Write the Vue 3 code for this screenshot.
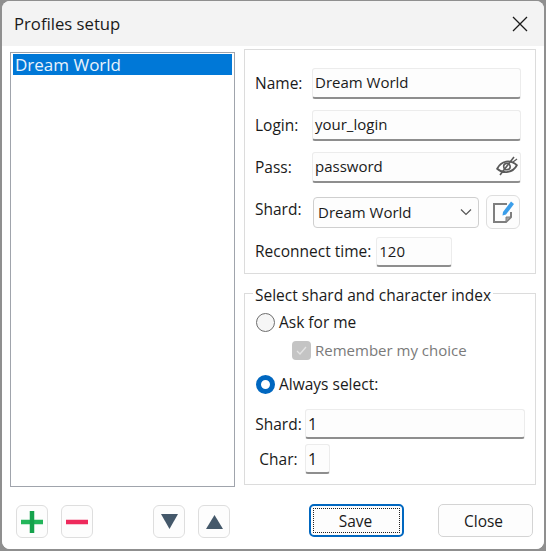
<template>
  <div class="screen">
    <div class="dialog">
      <header class="titlebar">
        <span class="title">Profiles setup</span>
        <svg class="close-x" width="16" height="16" viewBox="0 0 16 16">
          <path d="M1 1L15 15M15 1L1 15" stroke="#1a1a1a" stroke-width="1.3" fill="none" />
        </svg>
      </header>
      <div class="body">
        <div class="left">
          <div class="list">
            <div class="list-item">{{ profile.name }}</div>
          </div>
          <div class="tools">
            <button class="icon-btn">
              <svg width="22" height="22" viewBox="0 0 22 22">
                <path d="M0 11H22" stroke="#22b55a" stroke-width="4.5" fill="none" />
                <path d="M11 0V22" stroke="#15a24c" stroke-width="4.5" fill="none" />
              </svg>
            </button>
            <button class="icon-btn">
              <svg width="22" height="22" viewBox="0 0 22 22">
                <path d="M0 11H22" stroke="#ee2a5c" stroke-width="4.500" fill="none" />
              </svg>
            </button>
            <button class="icon-btn push">
              <svg width="17" height="15" viewBox="0 0 17 15">
                <path d="M0 0H17L8.500 15Z" fill="#44586a" />
              </svg>
            </button>
            <button class="icon-btn">
              <svg width="17" height="14" viewBox="0 0 17 14">
                <path d="M0 14H17L8.500 0Z" fill="#44586a" />
              </svg>
            </button>
          </div>
        </div>
        <div class="right">
          <section class="group group-main">
            <div class="row">
              <label>Name:</label>
              <div class="input wide">{{ profile.name }}</div>
            </div>
            <div class="row">
              <label>Login:</label>
              <div class="input wide">{{ profile.login }}</div>
            </div>
            <div class="row">
              <label>Pass:</label>
              <div class="input wide pass">
                {{ profile.pass }}
                <svg class="eye" width="22" height="20" viewBox="0 0 22 20">
                  <g transform="rotate(-10 11 11)">
                    <path d="M1 11C4 7 7 5.500 11 5.500C15 5.500 18 7 21 11C18 15 15 16 11 16C7 16 4 15 1 11Z" fill="none" stroke="#5a5a5a" stroke-width="1.800" />
                    <circle cx="11" cy="10.500" r="3.200" fill="none" stroke="#5a5a5a" stroke-width="1.600" />
                  </g>
                  <path d="M4 19L18 1" stroke="#5a5a5a" stroke-width="1.600" />
                  <path d="M17 6L21 3" stroke="#5a5a5a" stroke-width="1.200" />
                </svg>
              </div>
            </div>
            <div class="row shard-row">
              <label class="top-label">Shard:</label>
              <div class="select">
                {{ profile.name }}
                <svg width="12" height="8" viewBox="0 0 12 8">
                  <path d="M1 1.500L6 6.500L11 1.500" fill="none" stroke="#555" stroke-width="1.200" />
                </svg>
              </div>
              <button class="icon-btn edit-btn">
                <svg width="24" height="26" viewBox="0 0 24 26">
                  <path d="M16 5H3V23H15L20 18V13" fill="none" stroke="#7f7f7f" stroke-width="2" />
                  <path d="M15 23V18H20Z" fill="#a0a0a0" stroke="#7f7f7f" stroke-width="1" />
                  <path d="M12 13L20 2.500L23 5L15 15.500L11.500 16.500Z" fill="#3b9eea" />
                </svg>
              </button>
            </div>
            <div class="row reconnect">
              <label>Reconnect time:</label>
              <div class="input time">{{ profile.reconnect }}</div>
            </div>
          </section>
          <section class="group group-index">
            <div class="legend">Select shard and character index</div>
            <div class="option">
              <span class="radio"></span>
              <span>Ask for me</span>
            </div>
            <div class="option nested">
              <span class="check">
                <svg width="13" height="13" viewBox="0 0 13 13">
                  <path d="M2 7L5 10L11 3" fill="none" stroke="#e4e4e4" stroke-width="1.300" />
                </svg>
              </span>
              <span class="muted">Remember my choice</span>
            </div>
            <div class="option always">
              <span class="radio on"></span>
              <span>Always select:</span>
            </div>
            <div class="row index-row first">
              <label class="index-label">Shard:</label>
              <div class="input index-shard">1</div>
            </div>
            <div class="row index-row">
              <label class="index-label">Char:</label>
              <div class="input index-char">1</div>
            </div>
          </section>
          <div class="actions">
            <button class="btn primary"><span class="focus">Save</span></button>
            <button class="btn btn-close">Close</button>
          </div>
        </div>
      </div>
    </div>
  </div>
</template>

<script setup>
const profile = {
  name: 'Dream World',
  login: 'your_login',
  pass: 'password',
  reconnect: 120,
};
</script>

<style>
html,
body {
  margin: 0;
  background: #8c8c8c;
}
</style>

<style scoped>
.screen {
  width: 546px;
  height: 551px;
  padding: 1px 2px 2px 2px;
  box-sizing: border-box;
  background: #8f8f8f;
  font-family: 'Open Sans', 'Noto Sans', sans-serif;
  font-size: 15.5px;
  color: #1a1a1a;
}
.dialog {
  height: 100%;
  display: flex;
  flex-direction: column;
  background: #f9f9f9;
  border-radius: 8px;
  overflow: hidden;
}
.titlebar {
  height: 45px;
  flex: none;
  display: flex;
  align-items: center;
  justify-content: space-between;
  padding: 0 16px 0 12px;
  background: #f3f3f3;
}
.title {
  font-size: 16.7px;
}
.body {
  flex: 1;
  display: flex;
  background: #ffffff;
}
.left {
  width: 242px;
  flex: none;
  padding: 6px 0 0 8px;
  box-sizing: border-box;
}
.list {
  width: 225px;
  height: 435px;
  box-sizing: border-box;
  border: 1px solid #a0a4ac;
  padding: 1px 2px;
  background: #fff;
}
.list-item {
  background: #0078d7;
  color: #e8f2fb;
  font-size: 17px;
  height: 21px;
  line-height: 21px;
  padding-left: 2px;
}
.tools {
  display: flex;
  gap: 13px;
  margin-top: 18px;
  padding-left: 6px;
}
.icon-btn {
  width: 32px;
  height: 33px;
  padding: 0;
  display: flex;
  align-items: center;
  justify-content: center;
  background: #fdfdfd;
  border: 1px solid #dedede;
  border-radius: 6px;
}
.push {
  margin-left: 47px;
}
.right {
  flex: 1;
  min-width: 0;
}
.group {
  width: 292px;
  box-sizing: border-box;
  border: 1px solid #dcdcdc;
  position: relative;
}
.group-main {
  height: 225px;
  margin-top: 3px;
  padding: 18px 0 0 10px;
}
.group-index {
  height: 192px;
  margin-top: 19px;
  padding: 17px 0 0 11px;
}
.legend {
  position: absolute;
  top: -9px;
  left: 8px;
  padding: 0 2px;
  background: #fff;
  line-height: 20px;
}
.row {
  display: flex;
  align-items: center;
  margin-bottom: 11px;
}
.row label {
  width: 57px;
  flex: none;
  margin-bottom: 2px;
}
.input {
  height: 31px;
  line-height: 27px;
  box-sizing: border-box;
  padding-left: 2px;
  font-size: 15px;
  background: #fdfdfd;
  border: 1px solid #ececec;
  border-bottom: 2px solid #8e8e8e;
  border-radius: 3px;
}
.wide {
  width: 209px;
}
.pass {
  position: relative;
}
.eye {
  position: absolute;
  right: 2px;
  top: 3px;
}
.select {
  width: 166px;
  height: 31px;
  box-sizing: border-box;
  display: flex;
  align-items: center;
  justify-content: space-between;
  padding: 0 6px 0 4px;
  font-size: 15px;
  background: #fdfdfd;
  border: 1px solid #cfcfcf;
  border-radius: 4px;
}
.shard-row {
  margin-top: 12px;
  margin-bottom: 8px;
}
.row .top-label {
  width: 58px;
  margin-bottom: 6px;
}
.edit-btn {
  width: 34px;
  height: 34px;
  margin-left: 7px;
}
.reconnect label {
  width: auto;
  margin-right: 5px;
  margin-bottom: 3px;
}
.time {
  width: 76px;
  height: 30px;
}
.option {
  display: flex;
  align-items: center;
  gap: 4px;
  height: 22px;
}
.nested {
  margin: 6px 0 0 36px;
  font-size: 15px;
}
.always {
  margin-top: 12px;
}
.radio {
  width: 19px;
  height: 19px;
  box-sizing: border-box;
  border-radius: 50%;
  border: 1.5px solid #6e6e6e;
  background: #f6f6f6;
}
.radio.on {
  border: 5.5px solid #0067c0;
  background: #fff;
}
.check {
  width: 19px;
  height: 19px;
  display: flex;
  align-items: center;
  justify-content: center;
  background: #c4c4c4;
  border-radius: 4px;
}
.muted {
  color: #7a7a7a;
}
.index-row {
  margin-bottom: 5px;
}
.index-row.first {
  margin-top: 14px;
}
.index-row .index-label {
  width: 49px;
  margin: 0 2px 0 -2px;
  text-align: center;
}
.index-row .input {
  height: 30px;
  line-height: 28px;
  font-size: 16px;
}
.index-shard {
  width: 220px;
}
.index-char {
  width: 25px;
}
.actions {
  display: flex;
  gap: 34px;
  margin: 19px 0 0 65px;
}
.btn {
  width: 95px;
  height: 33px;
  padding: 0;
  font: inherit;
  color: inherit;
  background: #fdfdfd;
  border: 1px solid #d4d4d4;
  border-radius: 5px;
}
.btn-close {
  padding-right: 4px;
}
.primary {
  padding: 2px;
  border: 2px solid #0067c0;
}
.focus {
  display: flex;
  height: 100%;
  align-items: center;
  justify-content: center;
  box-sizing: border-box;
  padding-right: 2px;
  border: 1px dotted #222;
}
</style>
